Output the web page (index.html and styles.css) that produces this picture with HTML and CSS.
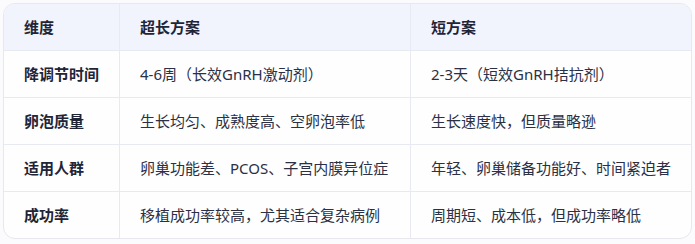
FILE: index.html
```html
<!DOCTYPE html>
<html lang="zh">
<head>
<meta charset="utf-8">
<link rel="stylesheet" href="styles.css">
</head>
<body>
<div class="wrap">
<table class="cmp">
<colgroup><col class="c1"><col class="c2"><col class="c3"></colgroup>
<thead>
<tr><th>维度</th><th>超长方案</th><th>短方案</th></tr>
</thead>
<tbody>
<tr><td class="k">降调节时间</td><td>4-6周（长效GnRH激动剂）</td><td>2-3天（短效GnRH拮抗剂）</td></tr>
<tr><td class="k">卵泡质量</td><td>生长均匀、成熟度高、空卵泡率低</td><td>生长速度快，但质量略逊</td></tr>
<tr><td class="k">适用人群</td><td>卵巢功能差、PCOS、子宫内膜异位症</td><td>年轻、卵巢储备功能好、时间紧迫者</td></tr>
<tr><td class="k">成功率</td><td>移植成功率较高，尤其适合复杂病例</td><td>周期短、成本低，但成功率略低</td></tr>
</tbody>
</table>
</div>
</body>
</html>
```
FILE: styles.css
```css
html, body { margin: 0; padding: 0; background: #fbfbfd; }
body { font-family: "Noto Sans", "Noto Sans CJK SC", sans-serif; color: #1f2537; }
.wrap { padding: 3px; }
.cmp {
  width: 689px;
  border-collapse: separate;
  border-spacing: 0;
  table-layout: fixed;
  border: 1px solid #e6e8ee;
  border-radius: 12px;
  overflow: hidden;
  background: #fefefe;
}
.c1 { width: 116px; }
.c2 { width: 291px; }
.c3 { width: auto; }
th, td {
  height: 46px;
  padding: 0 20px;
  font-size: 15px;
  text-align: left;
  vertical-align: middle;
  border-bottom: 1px solid #e8eaf1;
  border-right: 1px solid #e8eaf1;
  line-height: 20px;
}
th:last-child, td:last-child { border-right: none; }
tbody tr:last-child td { border-bottom: none; }
th { background: #f1f4fd; font-weight: 700; color: #1f2537; }
td { font-weight: 400; color: #2b3045; }
td.k { font-weight: 700; color: #1f2537; }
```
